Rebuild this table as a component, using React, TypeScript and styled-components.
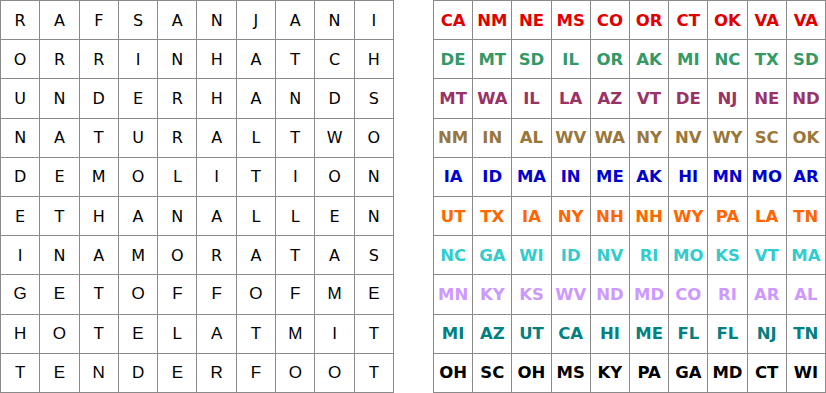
import React, { FC } from "react";
import styled, { createGlobalStyle } from "styled-components";

const GlobalStyle = createGlobalStyle`
  html, body {
    margin: 0;
    padding: 0;
    background: #ffffff;
  }
`;

const letters = [
  "RAFSANJANI",
  "ORRINHATCH",
  "UNDERHANDS",
  "NATURALTWO",
  "DEMOLITION",
  "ETHANALLEN",
  "INAMORATAS",
  "GETOFFOFME",
  "HOTELATMIT",
  "TENDERFOOT",
];

const states = [
  "CA NM NE MS CO OR CT OK VA VA",
  "DE MT SD IL OR AK MI NC TX SD",
  "MT WA IL LA AZ VT DE NJ NE ND",
  "NM IN AL WV WA NY NV WY SC OK",
  "IA ID MA IN ME AK HI MN MO AR",
  "UT TX IA NY NH NH WY PA LA TN",
  "NC GA WI ID NV RI MO KS VT MA",
  "MN KY KS WV ND MD CO RI AR AL",
  "MI AZ UT CA HI ME FL FL NJ TN",
  "OH SC OH MS KY PA GA MD CT WI",
].map((row) => row.split(" "));

const rowColors = [
  "#e00000",
  "#339966",
  "#993366",
  "#99773a",
  "#0000cc",
  "#ff6600",
  "#33cccc",
  "#cc99ff",
  "#008080",
  "#000000",
];

const Page = styled.div`
  display: flex;
  gap: 39px;
  width: 826px;
  height: 393px;
`;

const Grid = styled.div<{ $width: number }>`
  display: grid;
  grid-template-columns: repeat(10, 1fr);
  grid-template-rows: repeat(10, 1fr);
  width: ${(p) => p.$width}px;
  height: 393px;
  box-sizing: border-box;
  border-top: 1px solid #8a8a8a;
  border-left: 1px solid #8a8a8a;
`;

const Cell = styled.div`
  display: flex;
  align-items: center;
  justify-content: center;
  border-right: 1px solid #8a8a8a;
  border-bottom: 1px solid #8a8a8a;
  min-width: 0;
  min-height: 0;
`;

const Letter = styled(Cell)<{ $arial?: boolean }>`
  font-family: ${(p) =>
    p.$arial
      ? `"Liberation Sans", Arial, sans-serif`
      : `"DejaVu Sans", Verdana, sans-serif`};
  font-size: ${(p) => (p.$arial ? "17px" : "16px")};
  color: #000;
`;

const State = styled(Cell)<{ $color: string }>`
  font-family: "DejaVu Sans", Verdana, sans-serif;
  font-weight: bold;
  font-size: 16.5px;
  color: ${(p) => p.$color};
`;

const App: FC = () => (
  <>
    <GlobalStyle />
    <Page>
      <Grid $width={394}>
        {letters.map((row, r) =>
          row
            .split("")
            .map((ch, c) => (
              <Letter key={`${r}-${c}`} $arial={r >= 7}>
                {ch}
              </Letter>
            ))
        )}
      </Grid>
      <Grid $width={393}>
        {states.map((row, r) =>
          row.map((st, c) => (
            <State key={`${r}-${c}`} $color={rowColors[r]}>
              {st}
            </State>
          ))
        )}
      </Grid>
    </Page>
  </>
);

export default App;
